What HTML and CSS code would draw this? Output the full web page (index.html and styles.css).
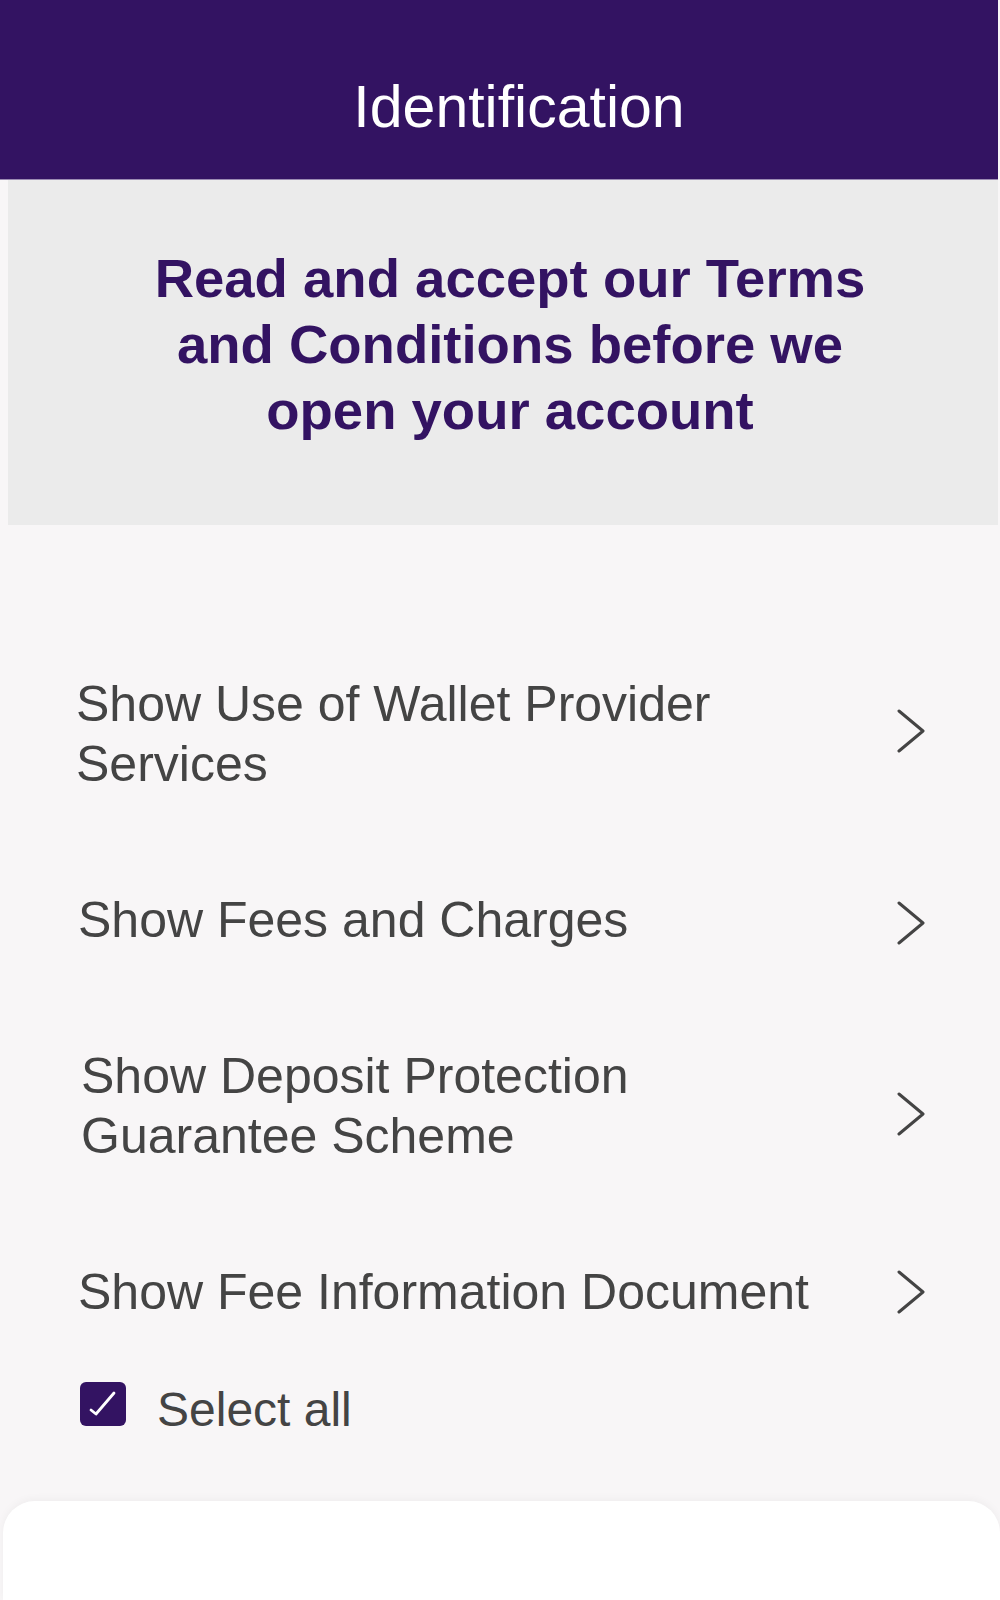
FILE: index.html
```html
<!DOCTYPE html>
<html lang="en">
<head>
<meta charset="utf-8">
<title>Identification</title>
<link rel="stylesheet" href="styles.css">
</head>
<body>
<div class="page">
  <header class="topbar">
    <h1 class="topbar-title">Identification</h1>
  </header>
  <section class="intro">
    <h2 class="intro-text">Read and accept our Terms and Conditions before we open your account</h2>
  </section>
  <main class="docs">
    <ul class="doc-list">
      <li class="doc-row doc-row-first">
        <span class="doc-label">Show Use of Wallet Provider Services</span>
        <svg class="chev chev-up" width="28" height="44" viewBox="0 0 28 44"><polyline points="2,2 26,22 2,42" fill="none" stroke="#444" stroke-width="3" stroke-linecap="round" stroke-linejoin="round"/></svg>
      </li>
      <li class="doc-row">
        <span class="doc-label">Show Fees and Charges</span>
        <svg class="chev chev-down" width="28" height="44" viewBox="0 0 28 44"><polyline points="2,2 26,22 2,42" fill="none" stroke="#444" stroke-width="3" stroke-linecap="round" stroke-linejoin="round"/></svg>
      </li>
      <li class="doc-row doc-row-inset">
        <span class="doc-label">Show Deposit Protection Guarantee Scheme</span>
        <svg class="chev chev-low" width="28" height="44" viewBox="0 0 28 44"><polyline points="2,2 26,22 2,42" fill="none" stroke="#444" stroke-width="3" stroke-linecap="round" stroke-linejoin="round"/></svg>
      </li>
      <li class="doc-row">
        <span class="doc-label">Show Fee Information Document</span>
        <svg class="chev" width="28" height="44" viewBox="0 0 28 44"><polyline points="2,2 26,22 2,42" fill="none" stroke="#444" stroke-width="3" stroke-linecap="round" stroke-linejoin="round"/></svg>
      </li>
    </ul>
    <label class="select-all">
      <span class="checkbox">
        <svg width="46" height="44" viewBox="0 0 46 44"><polyline points="11,28 16,32 34,11" fill="none" stroke="#fff" stroke-width="2.8" stroke-linecap="round" stroke-linejoin="round"/></svg>
      </span>
      <span class="select-text">Select all</span>
    </label>
  </main>
  <footer class="sheet"></footer>
</div>
</body>
</html>
```

FILE: styles.css
```css
html, body {
  margin: 0;
  padding: 0;
  background: #f8f6f7;
}

.page {
  width: 1000px;
  height: 1600px;
  display: flex;
  flex-direction: column;
  font-family: "Liberation Sans", Arial, sans-serif;
  overflow: hidden;
}

.topbar {
  background: #331362;
  height: 180px;
  box-sizing: border-box;
  padding: 73px 0 0 40px;
  margin-right: 2px;
  border-bottom: 1px solid #9b8bb3;
}

.topbar-title {
  margin: 0;
  color: #ffffff;
  font-weight: 400;
  font-size: 59px;
  line-height: 68px;
  text-align: center;
}

.intro {
  background: #ebebeb;
  margin: 0 2px 0 8px;
  height: 345px;
  box-sizing: border-box;
  padding: 66px 108px 0 122px;
  display: flex;
  justify-content: center;
}

.intro-text {
  margin: 0;
  max-width: 760px;
  color: #331362;
  font-weight: 700;
  font-size: 54.5px;
  line-height: 66px;
  text-align: center;
}

.docs {
  flex: 1;
  padding-top: 101px;
}

.doc-list {
  list-style: none;
  margin: 0;
  padding: 0;
}

.doc-row {
  display: flex;
  align-items: center;
  padding: 48px 75px 48px 78px;
}

.doc-row-first {
  padding-left: 76px;
}

.doc-row-inset {
  padding-left: 81px;
}

.doc-label {
  max-width: 760px;
  color: #444444;
  font-size: 50px;
  line-height: 60px;
}

.chev {
  margin-left: auto;
  flex: none;
  display: block;
}

.chev-up {
  margin-bottom: 6px;
}

.chev-down {
  margin-top: 6px;
}

.chev-low {
  margin-top: 15px;
}

.select-all {
  display: flex;
  align-items: center;
  padding: 0 0 0 80px;
  gap: 31px;
}

.checkbox {
  width: 46px;
  height: 44px;
  background: #331362;
  border-radius: 6px;
  display: block;
  flex: none;
}

.checkbox svg {
  display: block;
}

.select-text {
  color: #444444;
  font-size: 48px;
  line-height: 56px;
  padding-top: 12px;
}

.sheet {
  height: 99px;
  margin-left: 3px;
  background: #ffffff;
  border-radius: 32px 32px 0 0;
  box-shadow: 0 -2px 8px rgba(0, 0, 0, 0.04);
}
```
